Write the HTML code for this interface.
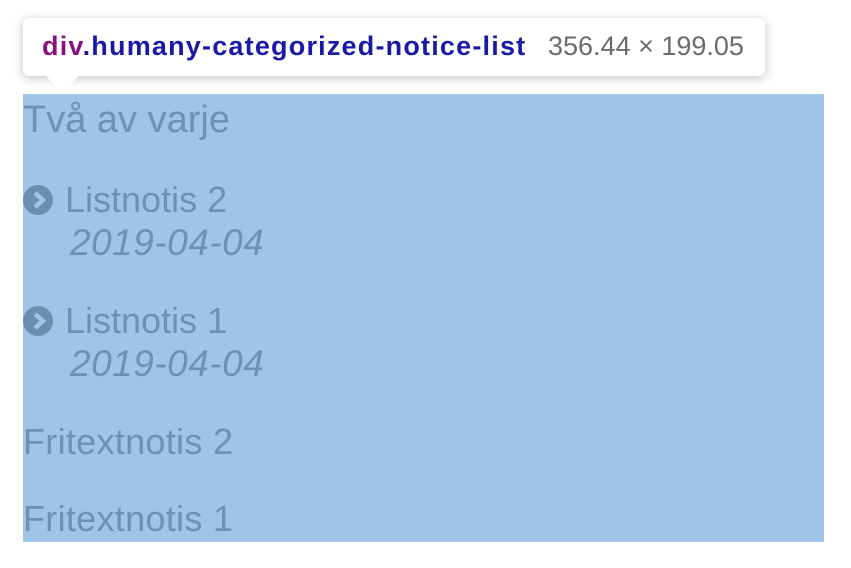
<!DOCTYPE html>
<html><head><style>
body{margin:0;width:851px;height:568px;background:#fff;position:relative;overflow:hidden;font-family:"Liberation Sans",sans-serif}
.hl{position:absolute;left:23px;top:94px;width:801px;height:448px;background:#a0c4e8}
.t{position:absolute;color:#6d90b4;font-size:36px;white-space:nowrap;line-height:1}
.tip{position:absolute;left:23px;top:18px;width:742px;height:58px;background:#fff;border-radius:6px;box-shadow:0 2px 10px rgba(0,0,0,.25)}
.arrow{position:absolute;left:45px;top:75px;width:0;height:0;border-left:17px solid transparent;border-right:17px solid transparent;border-top:18px solid #fff}
.tt{position:absolute;left:42px;top:33px;font-size:27px;letter-spacing:1.2px;font-weight:bold;color:#1a1aa6;white-space:nowrap;line-height:1}
.dim{position:absolute;left:548px;top:33px;font-size:27px;color:#6b6b6b;line-height:1;white-space:nowrap}
.ic{position:absolute;width:30px;height:30px;border-radius:50%;background:#6a8db0}
</style></head><body>
<div class="hl"></div>
<div class="t" style="left:23px;top:101px;font-size:38px">Två av varje</div>
<div class="ic" style="left:23px;top:185px"><svg width="30" height="30"><path d="M12 8l8 7-8 7" stroke="#a0c4e8" stroke-width="4.5" fill="none"/></svg></div>
<div class="t" style="left:65px;top:182px">Listnotis 2</div>
<div class="t" style="left:70px;top:224px;font-style:italic;font-size:37px;letter-spacing:0.5px">2019-04-04</div>
<div class="ic" style="left:23px;top:306px"><svg width="30" height="30"><path d="M12 8l8 7-8 7" stroke="#a0c4e8" stroke-width="4.5" fill="none"/></svg></div>
<div class="t" style="left:65px;top:303px">Listnotis 1</div>
<div class="t" style="left:70px;top:345px;font-style:italic;font-size:37px;letter-spacing:0.5px">2019-04-04</div>
<div class="t" style="left:23px;top:424px;letter-spacing:0.3px">Fritextnotis 2</div>
<div class="t" style="left:23px;top:501px;letter-spacing:0.3px">Fritextnotis 1</div>
<div class="tip"></div><div class="arrow"></div>
<div class="tt"><span style="color:#881280">div</span>.humany-categorized-notice-list</div>
<div class="dim">356.44 × 199.05</div>
</body></html>
